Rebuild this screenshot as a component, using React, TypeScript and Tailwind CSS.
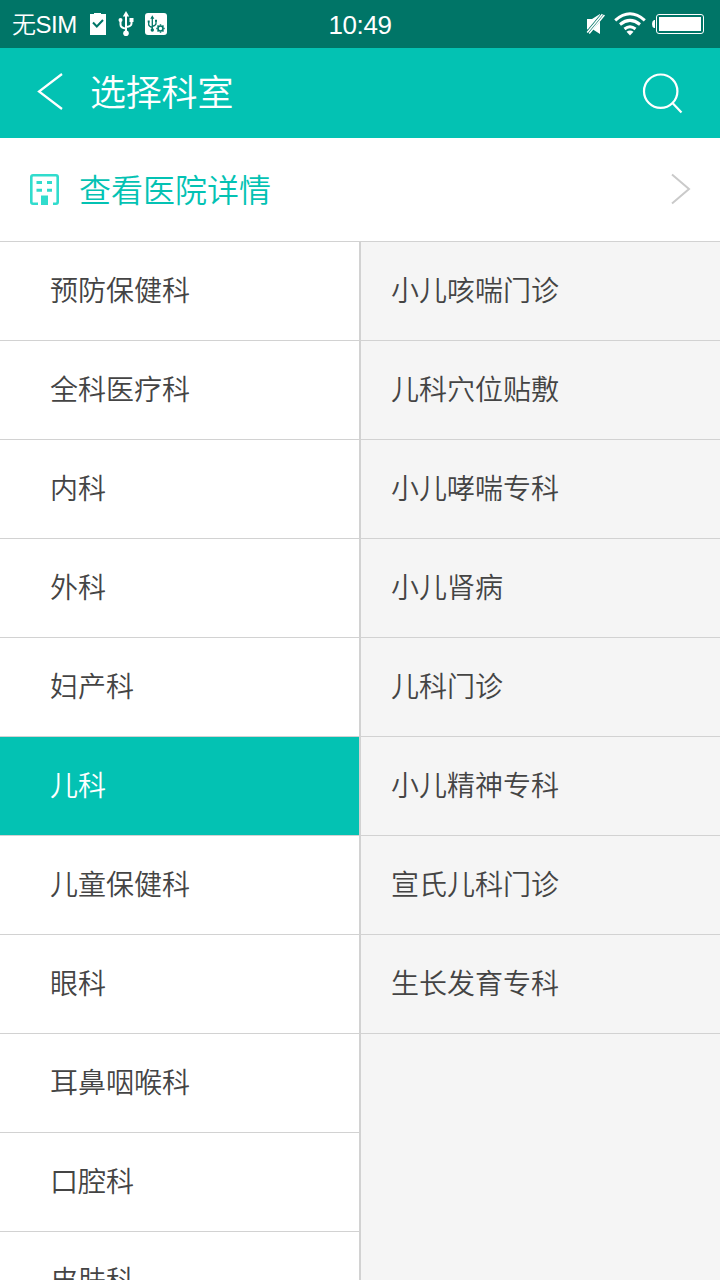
const departments = [
  "预防保健科",
  "全科医疗科",
  "内科",
  "外科",
  "妇产科",
  "儿科",
  "儿童保健科",
  "眼科",
  "耳鼻咽喉科",
  "口腔科",
  "皮肤科",
];

const clinics = [
  "小儿咳喘门诊",
  "儿科穴位贴敷",
  "小儿哮喘专科",
  "小儿肾病",
  "儿科门诊",
  "小儿精神专科",
  "宣氏儿科门诊",
  "生长发育专科",
];

const selected = "儿科";

function UsbIcon({ className }: { className?: string }) {
  return (
    <svg className={className} viewBox="0 0 16 26" fill="none" stroke="currentColor" strokeWidth="2">
      <path d="M8 4v18M2.5 9v4.5q0 3.5 5.5 4M13.5 9v3.5q0 3-5.5 3.5" />
      <path d="M8 0l3.2 5.5H4.8z" fill="currentColor" stroke="none" />
      <circle cx="8" cy="22.3" r="2.8" fill="currentColor" stroke="none" />
      <circle cx="2.5" cy="9" r="2" fill="currentColor" stroke="none" />
      <path d="M11.5 7h4v4h-4z" fill="currentColor" stroke="none" />
    </svg>
  );
}

function StatusBar() {
  return (
    <div className="grid h-12 shrink-0 grid-cols-[1fr_auto_1fr] items-center bg-[#007567] text-white">
      <div className="flex items-center pl-3">
        <span className="w-[77px] pt-[2px] text-[24px] leading-[46px] font-[350] tracking-[-0.5px] whitespace-nowrap">
          无SIM
        </span>
        <svg className="h-[22px] w-[18px]" viewBox="0 0 18 22">
          <path d="M1 1h4V0h7v1h5v21H1z" fill="#fff" />
          <path d="M4 9.5l3.8 4L14 7" fill="none" stroke="#007567" strokeWidth="2" />
        </svg>
        <UsbIcon className="ml-[11px] h-[26px] w-4" />
        <svg className="ml-[11px] size-[22px]" viewBox="0 0 22 22">
          <rect width="22" height="22" rx="3" fill="#fff" />
          <g fill="none" stroke="#007567" strokeWidth="1.3">
            <path d="M7.3 4v13M3.7 9v2.5q0 2 3.6 2.8M11 8v2.5q0 2-3.7 2.8" />
            <circle cx="15.5" cy="15.5" r="2.5" strokeWidth="1.6" />
            <path
              d="M15.5 11.3v1.3M15.5 18.4v1.3M11.3 15.5h1.3M18.4 15.5h1.3M12.5 12.5l1 1M17.5 17.5l1 1M18.5 12.5l-1 1M13.5 17.5l-1 1"
              strokeWidth="1.5"
            />
          </g>
          <path d="M7.3 2.3l2 3.5h-4zM2.7 7.5h2v2h-2zM10 6.8h2v2h-2z" fill="#007567" />
          <circle cx="7.3" cy="17" r="1.7" fill="#007567" />
        </svg>
      </div>
      <span className="pt-[2px] text-[26px] leading-none tracking-[-0.4px]">10:49</span>
      <div className="flex items-center justify-end pr-4">
        <svg className="h-[22px] w-5" viewBox="0 0 20 22">
          <path d="M1 6h5l8-5v20l-7-4.5H1z" fill="#fff" />
          <path d="M.8 20.8L17.6 .8" stroke="#007567" strokeWidth="4.2" />
          <path d="M1.2 19.6L16.4 1.2M3.2 20.4L18.4 2" stroke="#fff" strokeWidth="1.5" />
        </svg>
        <svg className="ml-2 h-6 w-8" viewBox="0 0 32 24" fill="none" stroke="#fff" strokeWidth="3">
          <path d="M1.2 8.3Q16-4.8 30.8 8.3M6 12.5q10-8.2 20 0M10.5 17q5.5-4.5 11 0" />
          <path d="M12.5 19.8q3.5-2.5 7 0L16 23.5z" fill="#fff" stroke="none" />
        </svg>
        <svg className="ml-[6px] h-5 w-[52px]" viewBox="0 0 52 20">
          <path d="M3 6v8H2q-2-1-2-4t2-4z" fill="#fff" />
          <rect x="4.5" y=".5" width="47" height="19" rx="2.5" fill="none" stroke="#fff" />
          <rect x="7" y="3" width="42" height="14" fill="#fff" />
        </svg>
      </div>
    </div>
  );
}

function Header() {
  return (
    <header className="flex h-[90px] shrink-0 items-center bg-[#03c2b3] px-9 text-white">
      <svg className="mb-1 h-10 w-7" viewBox="0 0 28 40" fill="none" stroke="currentColor" strokeWidth="2.2">
        <path d="M26 3L3 20.5 26 38" />
      </svg>
      <h1 className="ml-[26px] flex-1 pt-[2px] text-[36px] leading-none font-[350] tracking-[-0.2px]">选择科室</h1>
      <svg className="mt-[2px] size-[42px]" viewBox="0 0 42 42" fill="none" stroke="currentColor" strokeWidth="2.2">
        <circle cx="18.7" cy="18.2" r="16.7" />
        <path d="M30 29.5L39.5 39.5" />
      </svg>
    </header>
  );
}

function HospitalLink() {
  return (
    <a className="flex h-[104px] shrink-0 items-center border-b border-[#d2d2d2] pr-[29px] pl-[30px]">
      <svg className="h-8 w-[30px]" viewBox="0 0 30 32" fill="none" stroke="#31dccd">
        <path
          d="M8 29.7H3q-1.7 0-1.7-1.7V3q0-1.7 1.7-1.7h23q1.7 0 1.7 1.7v25q0 1.7-1.7 1.7h-3"
          strokeWidth="2.6"
        />
        <path d="M6.5 8.5H12M17 8.5h5M6.5 16.3H12M17 16.3h5" strokeWidth="3" />
        <path d="M11 21.5h7V31h-7z" fill="#31dccd" stroke="none" />
      </svg>
      <span className="ml-[19px] flex-1 pt-[2px] text-[32px] leading-none font-[350] text-[#03c2b3]">查看医院详情</span>
      <svg className="mb-[2px] h-8 w-5" viewBox="0 0 20 32" fill="none" stroke="#cacaca" strokeWidth="2">
        <path d="M1 1.5L18 16 1 30.5" />
      </svg>
    </a>
  );
}

export default function App() {
  return (
    <div className="flex h-[1280px] w-[720px] flex-col overflow-hidden bg-white font-['Liberation_Sans','Noto_Sans_CJK_SC',sans-serif]">
      <StatusBar />
      <Header />
      <HospitalLink />
      <main className="flex min-h-0 flex-1 text-[28px] leading-[98px] font-[350] text-[#444]">
        <ul className="w-[361px] shrink-0 overflow-hidden border-r-2 border-[#d2d2d2]">
          {departments.map((name) => (
            <li
              key={name}
              className={
                name === selected
                  ? "h-[99px] border-b border-[#d2d2d2] bg-[#03c2b3] pt-px pl-[50px] text-white"
                  : "h-[99px] border-b border-[#d2d2d2] pt-px pl-[50px]"
              }
            >
              {name}
            </li>
          ))}
        </ul>
        <ul className="flex-1 bg-[#f5f5f5]">
          {clinics.map((name) => (
            <li key={name} className="h-[99px] border-b border-[#d2d2d2] pt-px pl-[30px]">
              {name}
            </li>
          ))}
        </ul>
      </main>
    </div>
  );
}
